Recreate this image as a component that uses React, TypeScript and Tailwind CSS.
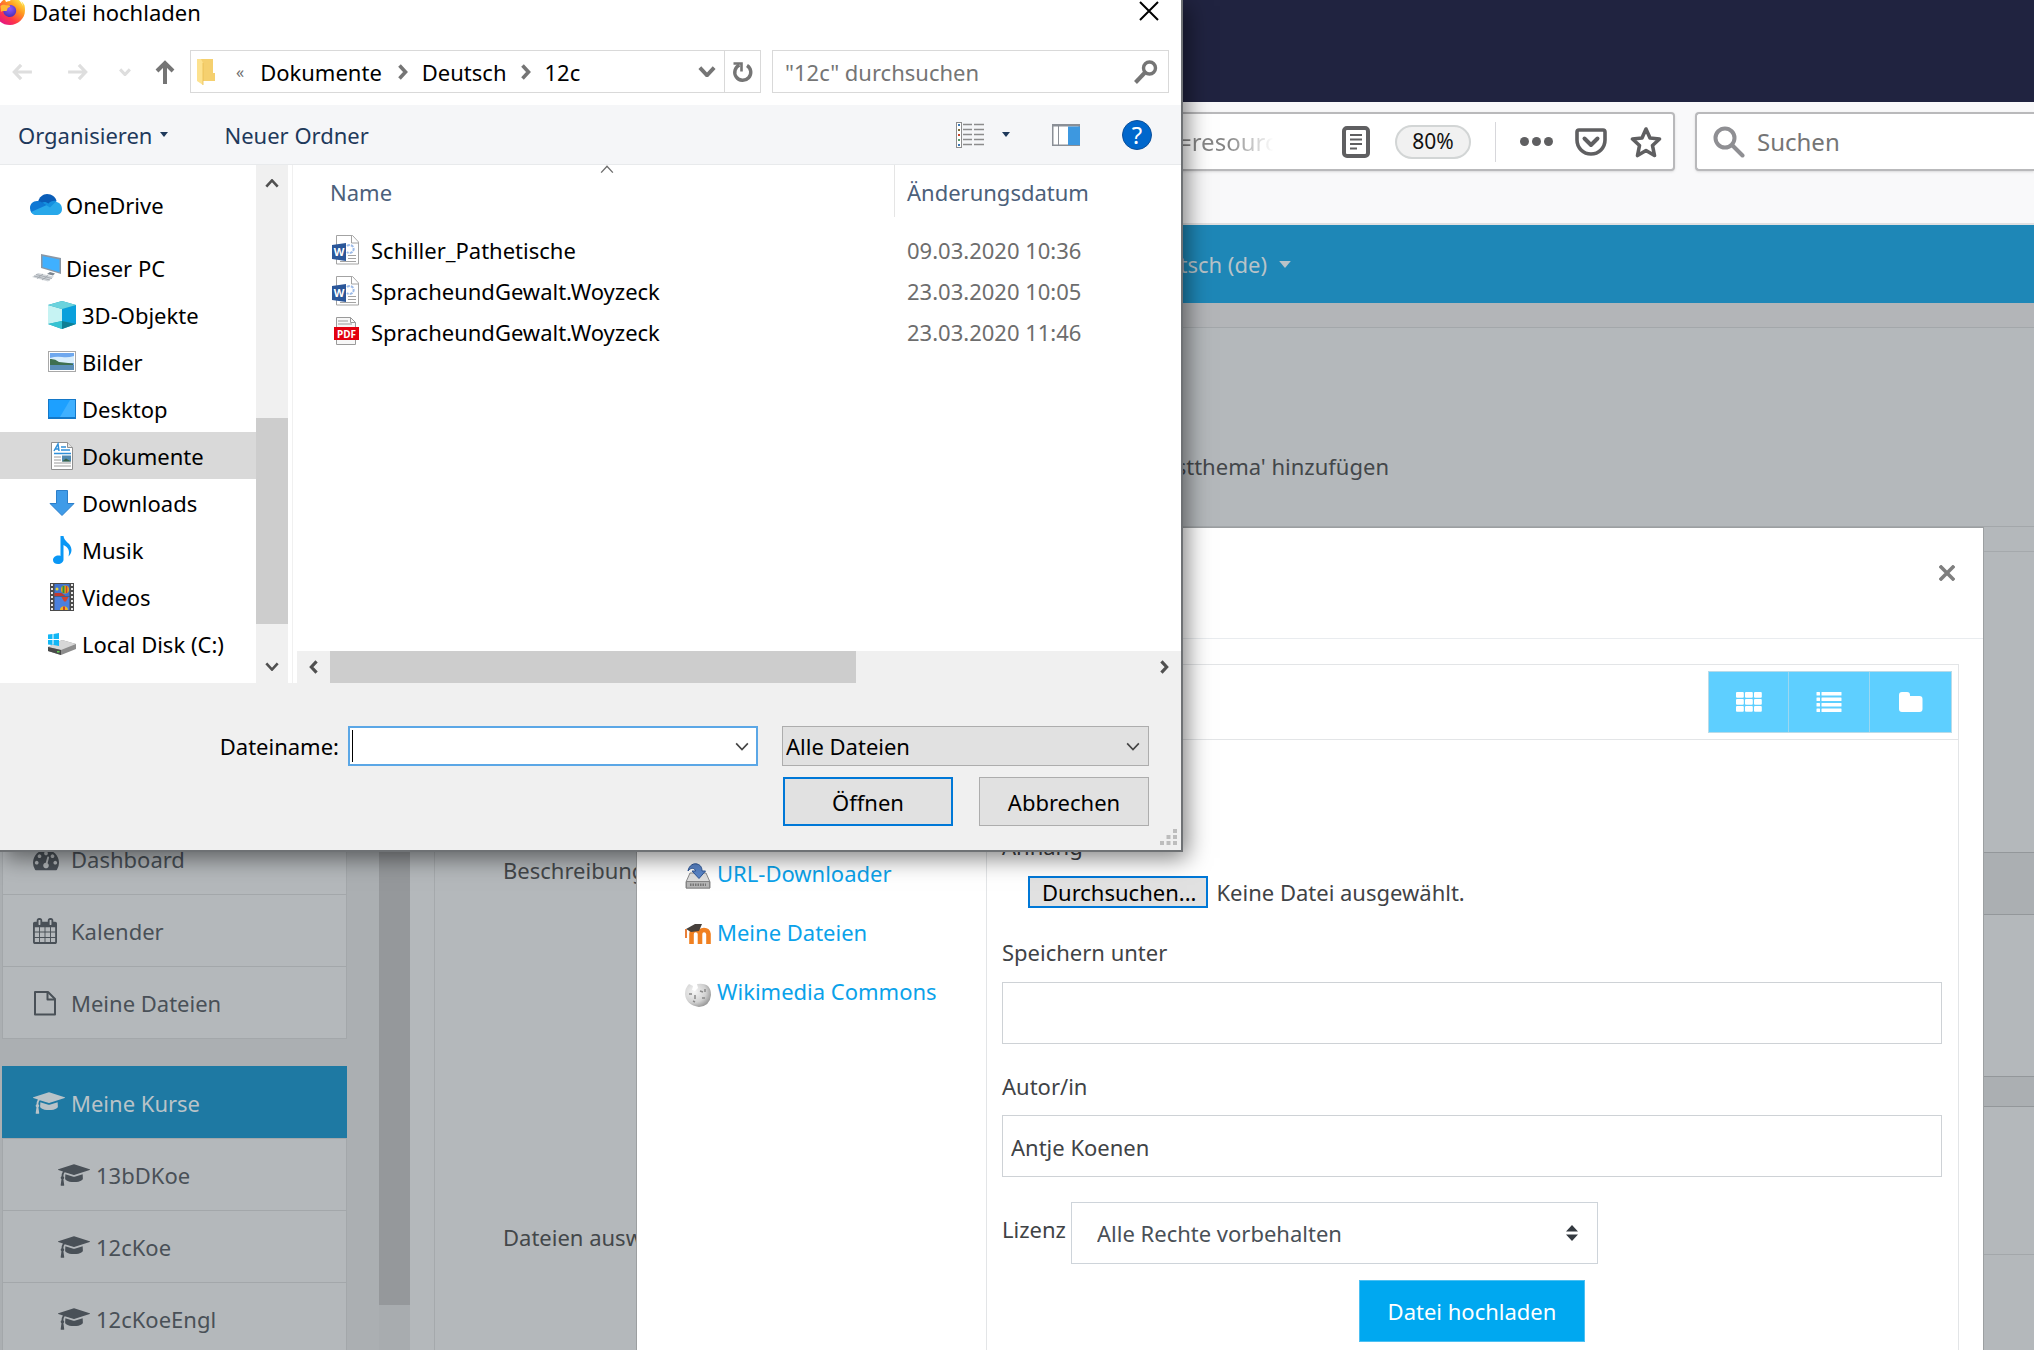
import type { ReactNode } from "react";

type IconProps = { className?: string };

/* ---------- window icons ---------- */

const Firefox = () => (
  <svg viewBox="0 0 32 32" className="size-8 -ml-1.5 -mt-1.5 shrink-0" aria-hidden="true">
    <defs>
      <linearGradient id="ffBody" x1="0.85" y1="0.1" x2="0.2" y2="0.95">
        <stop offset="0" stopColor="#fff44f" />
        <stop offset="0.35" stopColor="#ff9a1f" />
        <stop offset="0.7" stopColor="#ff3647" />
        <stop offset="1" stopColor="#e31587" />
      </linearGradient>
      <radialGradient id="ffGlobe" cx="0.5" cy="0.3" r="0.7">
        <stop offset="0" stopColor="#9059ff" />
        <stop offset="1" stopColor="#4a2fb5" />
      </radialGradient>
    </defs>
    <path
      d="M30.6 11.5c-.7-1.800-2.200-3.700-3.300-4.300.9 1.800 1.500 3.500 1.700 4.900C27.100 7.400 24 5.500 21.400 1.400c-.3-.4-.5-.9-.6-1.200-2.600 1.500-4.200 4.300-4.600 6.800-1.400.1-2.800.4-4.100 1-.8-1-1.200-3-1.200-3S8 6.500 6.400 9.200C5.500 8.500 5.300 5.900 5.300 5.900S1.300 10.500 1.300 17C1.300 25.300 8 31 16 31s15-6.500 15-14.500c0-1.700-.1-3.400-.4-5z"
      fill="url(#ffBody)"
    />
    <path d="M16 11c4 0 6.200 2.600 6.200 5.800s-2.600 6.200-6.200 6.200-6.600-2.600-6.600-5.800c0-1.600.6-2.700 1.400-3.400 1.600.4 3.200-.1 3.700-1.300z" fill="url(#ffGlobe)" />
    <path d="M6.400 12c2-2.200 5-1 6.200-.8 1 .1 3.700.2 3.600 1-.2 1-2 1.300-2.600 2-.6.800.2 2.200-1.400 2.700-1.900.6-3.200-.6-5.300 1z" fill="#ffb836" />
  </svg>
);

const ArrowLeft = ({ className }: IconProps) => (
  <svg viewBox="0 0 22 20" className={className} fill="none" stroke="currentColor" strokeWidth="3.600" aria-hidden="true">
    <path d="M10 2 2.500 10l7.500 8M3 10h19" />
  </svg>
);
const ArrowRight = ({ className }: IconProps) => (
  <svg viewBox="0 0 22 20" className={className} fill="none" stroke="currentColor" strokeWidth="3.600" aria-hidden="true">
    <path d="m12 2 7.500 8-7.500 8M19 10H0" />
  </svg>
);
const ArrowUp = ({ className }: IconProps) => (
  <svg viewBox="0 0 20 24" className={className} fill="none" stroke="currentColor" strokeWidth="4" aria-hidden="true">
    <path d="M2 11 10 3l8 8M10 3.500V24" />
  </svg>
);
const Chevron = ({ className, w = 2 }: IconProps & { w?: number }) => (
  <svg viewBox="0 0 16 10" className={className} fill="none" stroke="currentColor" strokeWidth={w} aria-hidden="true">
    <path d="m1.500 1.500 6.500 7 6.500-7" />
  </svg>
);
const ChevronRight = ({ className }: IconProps) => (
  <svg viewBox="0 0 10 16" className={className} fill="none" stroke="currentColor" strokeWidth="3.600" aria-hidden="true">
    <path d="m1.500 1.500 6 6.500-6 6.500" />
  </svg>
);
const Caret = ({ className }: IconProps) => (
  <svg viewBox="0 0 10 6" className={className} fill="currentColor" aria-hidden="true">
    <path d="M0 0h10L5 6z" />
  </svg>
);
const Close = ({ className, w = 2 }: IconProps & { w?: number }) => (
  <svg viewBox="0 0 20 20" className={className} fill="none" stroke="currentColor" strokeWidth={w} aria-hidden="true">
    <path d="m1 1 18 18M19 1 1 19" />
  </svg>
);
const Folder = () => (
  <svg viewBox="0 0 18 26" className="w-[18px] h-[26px]" aria-hidden="true">
    <path d="M3 0h13v14h2v8H3z" fill="#f5d06f" />
    <path d="M0 0h4l2 4v22l-6-4z" fill="#fde28f" />
    <path d="M6 4v22" stroke="#e9bd52" strokeWidth="0.800" />
  </svg>
);
const Refresh = () => (
  <svg viewBox="0 0 22 22" className="size-[22px]" fill="none" stroke="#757575" strokeWidth="3.400" aria-hidden="true">
    <path d="M15 4.500a8 8 0 1 1-7.500-.5" />
    <path d="M1.500 2.500h8v8" strokeWidth="2.600" />
  </svg>
);
const SearchGlass = () => (
  <svg viewBox="0 0 24 24" className="size-6" fill="none" stroke="#757575" strokeWidth="3.400" aria-hidden="true">
    <circle cx="15.500" cy="8" r="6" />
    <path d="M11 12.500 1.500 22.500" strokeWidth="4" />
  </svg>
);
const ListView = () => (
  <svg viewBox="0 0 28 26" className="w-7 h-[26px]" aria-hidden="true">
    <rect x="0.500" y="0.500" width="5" height="25" fill="#fff" stroke="#8c8c8c" />
    {[3, 8, 13, 18, 23].map((y, i) => (
      <g key={y}>
        <rect x="2" y={y - 1} width="2" height="2" fill={["#3c78b4", "#7a6a3a", "#c8452a", "#5a9a6a", "#3c78b4"][i]} />
        <path d={`M7 ${y - 0.5}h9M18 ${y - 0.5}h10`} stroke="#8c8c8c" strokeWidth="1.500" />
      </g>
    ))}
  </svg>
);
const PreviewPane = () => (
  <svg viewBox="0 0 28 22" className="w-7 h-[22px]" aria-hidden="true">
    <rect x="0.750" y="0.750" width="26.500" height="20.500" fill="#fff" stroke="#8a8f96" strokeWidth="1.500" />
    <path d="M0 1.500h28" stroke="#8a8f96" strokeWidth="2" />
    <path d="M6.500 2v19" stroke="#8a8f96" />
    <rect x="16" y="2.500" width="12" height="18.500" fill="#3d98e0" />
  </svg>
);

/* ---------- navigation tree icons ---------- */

const OneDrive = () => (
  <svg viewBox="0 0 32 22" className="w-8 h-[22px]" aria-hidden="true">
    <path d="M8 8C9 3 13 0 17 0c5 0 8.500 3 9.500 7L16 14z" fill="#0a5db8" />
    <path d="M6 21a7 7 0 0 1-6-7c0-4 3-7 7-7 2 0 3 .5 5 1.500l8 5z" fill="#0f78d4" />
    <path d="M19 10c3-3.500 13-3.500 13 5 0 4-3 6-6 6H6c-2 0-4-1-5-3z" fill="#28a8ea" />
    <path d="m12 8.500 8 5 6.500-6.500c-4-.500-6 .5-8 2.500-2-1.500-4-2-6.500-1z" fill="#1490df" />
  </svg>
);
const ThisPc = () => (
  <svg viewBox="0 0 30 28" className="w-[30px] h-7" aria-hidden="true">
    <path d="m9 0 20 4v16L9 14z" fill="#8a97a5" />
    <path d="m10.500 2 17 3.500v12.800L10.500 13z" fill="#3fb0ff" />
    <path d="m18 18 5 1.500-2 2-6-1.500z" fill="#7d8791" />
    <path d="m6 19 16 3.500-6 5L0 23z" fill="#d3d7db" />
    <path d="m4 20.500 16 4M2 22l16 4M5 24.500l6-4.500M10 26l6-4.500" stroke="#9aa1a8" strokeWidth="0.800" />
  </svg>
);
const Objects3d = () => (
  <svg viewBox="0 0 28 28" className="size-7" aria-hidden="true">
    <path d="M14 0 28 4v19l-14 5L0 23V4z" fill="#21a3bd" />
    <path d="m0 4 14 4v12L0 23z" fill="#c6f3f3" />
    <path d="m28 4-14 4v12l14 3z" fill="#0aa0dc" />
    <path d="m14 0 14 4-14 4L0 4z" fill="#6bd3dd" />
    <path d="m14 20 14 3-14 5z" fill="#0d7f95" />
    <path d="m14 20-14 3 14 5z" fill="#36c3d2" />
  </svg>
);
const Pictures = () => (
  <svg viewBox="0 0 28 21" className="w-7 h-[21px]" aria-hidden="true">
    <rect x="0.500" y="0.500" width="27" height="20" fill="#fff" stroke="#a8a8a8" />
    <rect x="2" y="2" width="24" height="17" fill="#6fa8ee" />
    <path d="M2 7q6-2 12-1t12-1v7H2z" fill="#d9eefc" />
    <path d="M2 8q5-.500 9 3l14 1.500v1.500H2z" fill="#3f7050" />
    <path d="M2 14h24v5H2z" fill="#5b8fb8" />
  </svg>
);
const Desktop = () => (
  <svg viewBox="0 0 28 20" className="w-7 h-5" aria-hidden="true">
    <rect width="28" height="20" fill="#1478c8" />
    <rect x="1" y="1" width="26" height="17" fill="#1da0ff" />
    <path d="M12 18 22 1h5v17z" fill="#3fb0ff" />
  </svg>
);
const Documents = () => (
  <svg viewBox="0 0 28 28" className="size-7" aria-hidden="true">
    <path d="M3.500.500h16l5 5v22h-21z" fill="#fff" stroke="#8f8f8f" />
    <path d="M19.500.500v5h5" fill="#e4e4e4" stroke="#8f8f8f" />
    <path d="m6 9 4-7 1 7M7.500 7h3M13 5h5M13 8h9M6 11.500h17" stroke="#2f8fd8" strokeWidth="1.500" fill="none" />
    <path d="M6 15h7M6 18h7M6 21h17M6 24h17" stroke="#9a9a9a" />
    <rect x="14" y="13.500" width="9" height="6" fill="#4f89b0" />
    <path d="m14 19.500 4-3 5 3z" fill="#3a6348" />
  </svg>
);
const Downloads = () => (
  <svg viewBox="0 0 28 28" className="size-7" aria-hidden="true">
    <path d="M8.500 1.500h11v13h6.500L14 26.500 2 14.500h6.500z" fill="#3f9be8" stroke="#2c7fca" />
  </svg>
);
const Music = () => (
  <svg viewBox="0 0 28 28" className="size-7" aria-hidden="true">
    <path d="M12.500 0h3c.5 6 8 7 8 14 0 3-1.500 5-3 6.500 1.500-6 0-9-5-11.500v14.500c0 2.500-2.500 4.500-5.500 4.500S5 26.500 5 24s2.500-4.500 5.500-4.500c.8 0 1.500.2 2 .4z" fill="#0a97f5" />
  </svg>
);
const Videos = () => (
  <svg viewBox="0 0 28 28" className="size-7" aria-hidden="true">
    <rect x="2" width="24" height="28" fill="#4b4b4b" />
    <rect x="6.500" y="1" width="15" height="12.500" fill="#3f74cf" />
    <rect x="6.500" y="14" width="15" height="13" fill="#4a80dd" />
    <path d="M3 2h2M3 6h2M3 10h2M3 14h2M3 18h2M3 22h2M3 26h2M23 2h2M23 6h2M23 10h2M23 14h2M23 18h2M23 22h2M23 26h2" stroke="#e8e8e8" strokeWidth="2" />
    <circle cx="17" cy="6.500" r="4" fill="#e8a91c" />
    <path d="M15.500 3v7" stroke="#2e8f3c" strokeWidth="2" />
    <path d="M18.500 3v7" stroke="#c8402a" strokeWidth="1.500" />
    <path d="M6.500 10h7l4 3h-11z" fill="#c23a2e" />
    <path d="M13.500 14h7l-2.500 4.500h-2z" fill="#d04330" />
    <path d="M12 27c0-5 8-5 8 0z" fill="#f0b71f" />
    <path d="M15 27v-3.500h2V27z" fill="#c8402a" />
    <circle cx="9" cy="6" r="1.500" fill="#e6d13c" />
  </svg>
);
const Disk = () => (
  <svg viewBox="0 0 28 22" className="w-7 h-[22px]" aria-hidden="true">
    <path d="m0 14 14-7 14 4v5l-15 6L0 18z" fill="#8d8d8d" />
    <path d="m0 14 14-7 14 4-15 6z" fill="#d7d7d7" />
    <path d="m0 14 13 3v5L0 18z" fill="#4a4a4a" />
    <rect x="9" y="18" width="2.500" height="1.500" fill="#63d253" />
    <path d="M0 1.500 4.500 1v5H0zM5.500 1 11 0v6H5.500zM0 7h4.500v5L0 11.500zM5.500 7H11v6l-5.500-1z" fill="#12b7f5" />
  </svg>
);

/* ---------- file type icons ---------- */

const WordFile = () => (
  <svg viewBox="0 0 28 30" className="w-7 h-[30px]" aria-hidden="true">
    <path d="M4.500.500h16l6 6.500v22h-22z" fill="#fff" stroke="#a3a3a3" />
    <path d="M19.500.500V8h7" fill="#fff" stroke="#a3a3a3" />
    <path d="M15 11a4 4 0 1 1 0 6" fill="none" stroke="#9dbbe8" strokeWidth="2" strokeDasharray="3 1" />
    <path d="M16 20.500h8M16 23.500h8M8 26.500h16" stroke="#a3a3a3" strokeWidth="1.200" />
    <path d="m0 10 14-2v18L0 24z" fill="#2a5699" />
    <text x="7" y="21" textAnchor="middle" fontSize="11" fontWeight="700" fill="#fff">W</text>
  </svg>
);
const PdfFile = () => (
  <svg viewBox="0 0 28 30" className="w-7 h-[30px]" aria-hidden="true">
    <path d="M4.500.500h14l5 5v22h-19z" fill="#f7f7f7" stroke="#9a9a9a" />
    <path d="M18.500.500v5h5M6 4h10M6 7h14" fill="none" stroke="#9a9a9a" />
    <rect x="2" y="10" width="25" height="13" fill="#e3000f" />
    <text x="14.500" y="20.500" textAnchor="middle" fontSize="10" fontWeight="700" fill="#fff">PDF</text>
  </svg>
);

/* ---------- website icons ---------- */

const Glyph = ({ box, d, className }: { box: string; d: string; className: string }) => (
  <svg viewBox={box} className={className} fill="currentColor" aria-hidden="true">
    <path d={d} />
  </svg>
);
const GraduationCap = () => (
  <Glyph
    box="0 0 2304 1792"
    className="w-8 h-[26px]"
    d="M1774 836l18 316q4 69-82 128t-235 93.500-323 34.500-323-34.500-235-93.500-82-128l18-316 574 181q22 7 48 7t48-7zm530-324q0 23-22 31l-1120 352q-4 1-10 1t-10-1l-652-206q-43 34-71 111.500t-34 178.500q63 36 63 109 0 69-58 107l58 433q2 14-8 25-9 11-24 11h-192q-15 0-24-11-10-11-8-25l58-433q-58-38-58-107 0-73 65-111 11-207 98-330l-333-104q-22-8-22-31t22-31l1120-352q4-1 10-1t10 1l1120 352q22 8 22 31z"
  />
);
const Calendar = () => (
  <Glyph
    box="64 0 1664 1792"
    className="w-6 h-[26px]"
    d="M192 1664h288v-288h-288v288zm352 0h320v-288h-320v288zm-352-352h288v-320h-288v320zm352 0h320v-320h-320v320zm-352-384h288v-288h-288v288zm736 736h320v-288h-320v288zm-384-736h320v-288h-320v288zm768 736h288v-288h-288v288zm-384-352h320v-320h-320v320zm-352-864v-288q0-13-9.500-22.500t-22.500-9.500h-64q-13 0-22.500 9.500t-9.500 22.500v288q0 13 9.500 22.500t22.500 9.500h64q13 0 22.500-9.500t9.500-22.500zm736 864h288v-320h-288v320zm-384-384h320v-288h-320v288zm384 0h288v-288h-288v288zm32-480v-288q0-13-9.500-22.500t-22.500-9.500h-64q-13 0-22.500 9.500t-9.500 22.500v288q0 13 9.500 22.500t22.500 9.500h64q13 0 22.500-9.500t9.500-22.500zm384-64v1280q0 52-38 90t-90 38h-1408q-52 0-90-38t-38-90v-1280q0-52 38-90t90-38h128v-96q0-66 47-113t113-47h64q66 0 113 47t47 113v96h384v-96q0-66 47-113t113-47h64q66 0 113 47t47 113v96h128q52 0 90 38t38 90z"
  />
);
const Gauge = () => (
  <Glyph
    box="0 0 1792 1792"
    className="w-[26px] h-[26px]"
    d="M384 1152q0-53-37.500-90.500t-90.500-37.500-90.500 37.500-37.500 90.500 37.500 90.500 90.500 37.500 90.500-37.500 37.500-90.500zm192-448q0-53-37.500-90.500t-90.500-37.500-90.500 37.500-37.500 90.500 37.500 90.500 90.500 37.500 90.500-37.500 37.500-90.500zm428 481l101-382q6-26-7.500-48.500t-38.500-29.500-48 6.500-30 39.500l-101 382q-60 5-107 43.500t-63 98.500q-20 77 20 146t117 89 146-20 89-117q16-60-6-117t-72-91zm660-33q0-53-37.500-90.500t-90.500-37.500-90.500 37.500-37.500 90.500 37.500 90.500 90.500 37.500 90.500-37.500 37.500-90.500zm-640-640q0-53-37.500-90.500t-90.500-37.500-90.500 37.500-37.500 90.500 37.500 90.500 90.500 37.500 90.500-37.500 37.500-90.500zm448 192q0-53-37.500-90.500t-90.500-37.500-90.500 37.500-37.500 90.500 37.500 90.500 90.500 37.500 90.500-37.500 37.500-90.500zm320 448q0 261-141 483-19 29-54 29h-1402q-35 0-54-29-141-221-141-483 0-182 71-348t191-286 286-191 348-71 348 71 286 191 191 286 71 348z"
  />
);
const FileOutline = () => (
  <svg viewBox="0 0 24 26" className="w-6 h-[26px]" fill="none" stroke="currentColor" strokeWidth="2" strokeLinejoin="round" aria-hidden="true">
    <path d="M2 2h13l7 7v15.500H2z" />
    <path d="M14.500 2v7.500H22" />
  </svg>
);

const ReaderMode = () => (
  <svg viewBox="0 0 28 32" className="w-7 h-8" fill="none" stroke="currentColor" aria-hidden="true">
    <rect x="2" y="2" width="24" height="28" rx="3" strokeWidth="4" />
    <path d="M8 9h12M8 13.500h12M8 18h12M8 22.500h7" strokeWidth="2.200" />
  </svg>
);
const Pocket = () => (
  <svg viewBox="0 0 32 30" className="w-8 h-[30px]" fill="none" stroke="currentColor" strokeWidth="4" strokeLinecap="round" strokeLinejoin="round" aria-hidden="true">
    <path d="M4 3h24q2 0 2 2v8a14 14 0 0 1-28 0V5q0-2 2-2z" strokeWidth="3.600" />
    <path d="m9.500 11.500 6.500 6.500 6.500-6.500" />
  </svg>
);
const Star = () => (
  <svg viewBox="0 0 32 32" className="size-8" fill="none" stroke="currentColor" strokeWidth="3.600" strokeLinejoin="round" aria-hidden="true">
    <path d="m16 3 4 9 9.500 1-7 6.500 2 10L16 24.500l-8.500 5 2-10-7-6.500L12 12z" />
  </svg>
);
const Magnifier = () => (
  <svg viewBox="0 0 32 32" className="size-8 shrink-0" fill="none" stroke="#8f8f93" strokeWidth="4" strokeLinecap="round" aria-hidden="true">
    <circle cx="12" cy="12" r="9.500" />
    <path d="m19.500 19.500 10 10" />
  </svg>
);

const Grid = () => (
  <svg viewBox="0 0 26 20" className="w-[26px] h-5" fill="currentColor" aria-hidden="true">
    {[0, 7, 14].map((y) => [0, 9, 18].map((x) => <rect key={`${x}-${y}`} x={x} y={y} width="7.800" height="5.800" rx="1" />))}
  </svg>
);
const ListGlyph = () => (
  <svg viewBox="0 0 26 20" className="w-[26px] h-5" fill="currentColor" aria-hidden="true">
    {[0, 5.5, 11, 16.5].map((y) => (
      <g key={y}>
        <rect x="0.500" y={y} width="3.500" height="3.500" rx="0.500" />
        <rect x="5.500" y={y} width="20" height="3.500" rx="0.500" />
      </g>
    ))}
  </svg>
);
const FolderGlyph = () => (
  <svg viewBox="0 0 24 20" className="w-6 h-5" fill="currentColor" aria-hidden="true">
    <path d="M0 3q0-3 3-3h5q3 0 3 3v1h9.500q3 0 3 3v10q0 3-3 3H3q-3 0-3-3z" />
  </svg>
);

const UrlDownloader = () => (
  <svg viewBox="0 0 26 26" className="size-[26px]" aria-hidden="true">
    <path d="M5 10h16l4 9v6H1v-6z" fill="#dedede" stroke="#8a8a8a" />
    <rect x="1.500" y="18.500" width="23" height="6.500" fill="#b5b5b5" stroke="#858585" />
    <path d="M5 21.800h16" stroke="#777" strokeWidth="2.500" strokeDasharray="1.500 1" />
    <path d="M3 8C4 2 9 0 12 1c4 1 5 4 5 7h3.500L14 15.500 7 8h3.500C10 5 6 4 3 8z" fill="#5a85c8" stroke="#2c5596" />
  </svg>
);
const Moodle = () => (
  <svg viewBox="0 0 26 26" className="size-[26px]" aria-hidden="true">
    <path d="M6.500 22V12q0-4 4.200-4t4.300 4v10M15 22V12q0-4 4-4t4.500 4v10" fill="none" stroke="#f08021" strokeWidth="4.600" />
    <path d="m1 7 9-5 7 0-3 7-8 1z" fill="#46403c" />
    <path d="M1 7v9" stroke="#e8803a" strokeWidth="2" />
  </svg>
);
const Wiki = () => (
  <svg viewBox="0 0 26 26" className="size-[26px]" aria-hidden="true">
    <defs>
      <radialGradient id="wikiBall" cx="0.350" cy="0.350" r="0.750">
        <stop offset="0" stopColor="#f6f6f6" />
        <stop offset="0.600" stopColor="#d2d2d2" />
        <stop offset="1" stopColor="#8d8d8d" />
      </radialGradient>
    </defs>
    <path d="M4 3 8 5l-1 4 3 1 3-3-1-4q14-2 14 11-1 11-12 12Q1 24 0 13 0 7 4 3z" fill="url(#wikiBall)" />
    <path d="M4 13h3M10 14v4M15 10l3 1M17 17h3M8 20l2 1M20 8v3" stroke="#8a8a8a" strokeWidth="1.500" />
  </svg>
);

/* ---------- data ---------- */

const treeItems: { label: string; icon: ReactNode; selected?: boolean }[] = [
  { label: "3D-Objekte", icon: <Objects3d /> },
  { label: "Bilder", icon: <Pictures /> },
  { label: "Desktop", icon: <Desktop /> },
  { label: "Dokumente", icon: <Documents />, selected: true },
  { label: "Downloads", icon: <Downloads /> },
  { label: "Musik", icon: <Music /> },
  { label: "Videos", icon: <Videos /> },
  { label: "Local Disk (C:)", icon: <Disk /> },
];

const files = [
  { name: "Schiller_Pathetische", date: "09.03.2020 10:36", icon: <WordFile /> },
  { name: "SpracheundGewalt.Woyzeck", date: "23.03.2020 10:05", icon: <WordFile /> },
  { name: "SpracheundGewalt.Woyzeck", date: "23.03.2020 11:46", icon: <PdfFile /> },
];

const repositories = [
  { label: "URL-Downloader", icon: <UrlDownloader /> },
  { label: "Meine Dateien", icon: <Moodle /> },
  { label: "Wikimedia Commons", icon: <Wiki /> },
];

/* ---------- browser and page behind ---------- */

function BrowserBar() {
  return (
    <header>
      <div className="h-[102px] bg-[#202340]" />
      <div className="flex h-[123px] items-start bg-[#f9f9fa] pt-2.5 border-b-2 border-[#e0e0e1]">
        <div className="flex h-[59px] w-[1675px] items-center justify-end rounded-sm border-2 border-[#b9b9bb] bg-white pr-[11px] text-[#5f5f61] shadow-sm">
          <span className="mr-[52px] bg-linear-to-r from-[#858585] from-45% to-transparent to-85% bg-clip-text text-2xl text-transparent">=resource</span>
          <button aria-label="Leseansicht"><ReaderMode /></button>
          <button className="ml-[25px] h-[34px] w-[76px] rounded-full border-2 border-[#d2d5d5] bg-[#f1f1f1] text-[21px] leading-none text-[#111]">80%</button>
          <span className="ml-6 mr-6 h-10 w-px bg-[#d7d7db]" />
          <button aria-label="Seitenaktionen" className="flex gap-[3px]">
            <i className="size-[9px] rounded-full bg-current" />
            <i className="size-[9px] rounded-full bg-current" />
            <i className="size-[9px] rounded-full bg-current" />
          </button>
          <button aria-label="In Pocket speichern" className="ml-[22px]"><Pocket /></button>
          <button aria-label="Lesezeichen" className="ml-[23px]"><Star /></button>
        </div>
        <label className="ml-5 flex h-[59px] flex-1 items-center gap-3 rounded-l-sm border-2 border-r-0 border-[#b9b9bb] bg-white pl-4 shadow-sm">
          <Magnifier />
          <input aria-label="Suchen" placeholder="Suchen" className="w-full text-2xl outline-none placeholder:text-[#757575]" />
        </label>
      </div>
      <div className="flex h-[78px] items-center bg-[#1e87b7] text-[#b9c3c8]">
        <button className="flex w-[1291px] items-center justify-end gap-3">
          Deutsch (de) <Caret className="h-[7px] w-3" />
        </button>
      </div>
    </header>
  );
}

function SideLink({ icon, label, sub, active }: { icon: ReactNode; label: string; sub?: boolean; active?: boolean }) {
  return (
    <a
      href="#"
      className={`flex h-[73px] -mb-px shrink-0 items-center border ${
        active ? "border-[#1e79a3] bg-[#1e79a3] text-[#b9c3c8]" : "border-[#a3a7aa] bg-[#b4b8bb] text-[#495057]"
      } ${sub ? "pl-[55px]" : "pl-[30px]"}`}
    >
      <span className="w-[38px] shrink-0">{icon}</span>
      {label}
    </a>
  );
}

function Page() {
  return (
    <div className="flex min-h-0 flex-1 bg-[#b4b8bb]">
      <nav aria-label="Hauptmenü" className="w-[379px] shrink-0 bg-[#abafb2] pl-0.5 pr-8 pt-[519px]">
        <SideLink icon={<Gauge />} label="Dashboard" />
        <SideLink icon={<Calendar />} label="Kalender" />
        <SideLink icon={<FileOutline />} label="Meine Dateien" />
        <div className="h-7" />
        <SideLink icon={<GraduationCap />} label="Meine Kurse" active />
        <SideLink icon={<GraduationCap />} label="13bDKoe" sub />
        <SideLink icon={<GraduationCap />} label="12cKoe" sub />
        <SideLink icon={<GraduationCap />} label="12cKoeEngl" sub />
      </nav>
      <div className="w-[31px] shrink-0 bg-[#a8acaf]">
        <div className="h-[1002px] bg-[#95989b]" />
      </div>
      <main className="flex flex-1 flex-col">
        <div className="h-6 bg-[#b3b5b8]" />
        <div className="flex h-[200px] items-center border-y border-[#a3a7aa] pt-[78px]">
          <h1 className="w-[979px] text-right text-[#43474a]">Datei zu 'Testthema' hinzufügen</h1>
        </div>
        <div className="mt-6 ml-6 flex flex-1 border-l border-t border-[#a5a9ac] text-[#43474a]">
          <div className="w-[240px] pl-[68px] pt-[303px]">
            <div className="h-[367px]">Beschreibung</div>
            <div>Dateien auswählen</div>
          </div>
          <div className="flex-1 pt-[300px]">
            <div className="h-[63px] border-y border-[#93979a] bg-[#abafb2]" />
            <div className="h-[161px]" />
            <div className="h-[31px] border-y border-[#93979a] bg-[#abafb2]" />
            <div className="h-[148px] border-b border-[#a3a7aa]" />
          </div>
        </div>
      </main>
    </div>
  );
}

/* ---------- file picker ---------- */

function FilePicker() {
  return (
    <section aria-label="Dateiauswahl" className="absolute top-[527px] right-[50px] bottom-0 left-[636px] flex flex-col border border-b-0 border-[#9c9fa1] bg-white text-[#3f4346]">
      <div className="flex h-[111px] shrink-0 justify-end border-b border-[#e9ecef] pr-7 pt-[37px]">
        <button aria-label="Schließen" className="size-4 text-[#7f7f7f]"><Close w={4.5} className="size-4" /></button>
      </div>
      <div className="ml-[25px] mr-6 mt-[25px] flex flex-1 flex-col border-r border-t border-[#e3e5e7]">
        <div className="flex h-[75px] shrink-0 items-center justify-end border-b border-[#e3e5e7] pr-1.5">
          <div className="flex h-[62px] divide-x divide-[#9bd7f0] border border-[#b8dbe9] bg-[#5ecfff] text-white">
            <button aria-label="Symbole" className="flex w-20 items-center justify-center"><Grid /></button>
            <button aria-label="Liste" className="flex w-[81px] items-center justify-center"><ListGlyph /></button>
            <button aria-label="Ordner" className="flex w-[81px] items-center justify-center"><FolderGlyph /></button>
          </div>
        </div>
        <div className="flex flex-1">
          <nav aria-label="Repositories" className="w-[325px] shrink-0 border-r border-[#e3e5e7] pl-[23px] pt-[103px]">
            {repositories.map((r) => (
              <a key={r.label} href="#" className="flex h-[59px] items-center gap-1.5 text-[#0aa2ea]">
                <span className="pt-1.5">{r.icon}</span>
                {r.label}
              </a>
            ))}
          </nav>
          <form className="flex flex-1 flex-col pl-[15px] pr-4 pt-[90px]">
            <p className="leading-8">Anhang</p>
            <div className="mt-3.5 flex items-center gap-2 pl-[26px]">
              <label className="flex h-8 items-center border-2 border-[#0078d7] bg-[#e1e1e1] pl-3 pr-2.5 text-black">
                Durchsuchen...
                <input type="file" className="sr-only" />
              </label>
              <span>Keine Datei ausgewählt.</span>
            </div>
            <label htmlFor="save-as" className="mt-7 leading-8">Speichern unter</label>
            <input id="save-as" className="mt-3.5 h-[62px] border border-[#ced2d6] px-2.5 outline-none" />
            <label htmlFor="author" className="mt-[26px] leading-8">Autor/in</label>
            <input id="author" defaultValue="Antje Koenen" className="mt-[13px] h-[62px] border border-[#ced2d6] px-2 pt-0.5 outline-none" />
            <div className="mt-[25px] flex gap-1.5">
              <label htmlFor="licence" className="w-[63px] pt-[11px] leading-8">Lizenz</label>
              <div className="relative w-[527px]">
                <select id="licence" className="h-[62px] w-full appearance-none border border-[#ced4da] bg-white pl-[25px] pr-10 text-[#495057] outline-none">
                  <option>Alle Rechte vorbehalten</option>
                </select>
                <svg viewBox="0 0 12 16" className="pointer-events-none absolute right-5 top-[23px] h-4 w-3" fill="#343a40" aria-hidden="true">
                  <path d="M6 0 12 6.500H0zM6 16l6-6.500H0z" />
                </svg>
              </div>
            </div>
            <button type="button" className="mt-4 h-[62px] w-[226px] self-center border border-[#4cc0f3] bg-[#00a8f0] text-white">
              Datei hochladen
            </button>
          </form>
        </div>
      </div>
    </section>
  );
}

/* ---------- upload dialog ---------- */

function TreePane() {
  return (
    <div className="flex w-[288px] shrink-0">
      <ul className="w-64 pt-4">
        <li className="flex h-[47px] items-center gap-1 pl-[30px]"><OneDrive />OneDrive</li>
        <li className="mt-4 flex h-[47px] items-center gap-1 pl-8"><ThisPc />Dieser PC</li>
        {treeItems.map((t) => (
          <li key={t.label} className={`flex h-[47px] items-center gap-1.5 pl-12 ${t.selected ? "bg-[#d9d9d9]" : ""}`}>
            {t.icon}
            {t.label}
          </li>
        ))}
      </ul>
      <div className="flex flex-1 flex-col items-center bg-[#f0f0f0] text-[#505050]">
        <Chevron w={3} className="mt-3.5 h-[9px] w-3.5 rotate-180" />
        <div className="mt-[230px] h-[206px] w-full bg-[#cdcdcd]" />
        <Chevron w={3} className="mt-[38px] h-[9px] w-3.5" />
      </div>
    </div>
  );
}

function FilesPane() {
  return (
    <div className="ml-1 flex flex-1 flex-col border-l border-[#f0f0f0] pl-1">
      <table className="w-full table-fixed border-collapse text-left">
        <colgroup>
          <col className="w-[598px]" />
          <col />
        </colgroup>
        <thead>
          <tr className="text-[#4c607a]">
            <th className="relative p-0 pb-3 font-normal">
              <Chevron w={1.5} className="absolute left-[302px] top-0 h-[9px] w-4 rotate-180 text-[#6d6d6d]" />
              <div className="flex h-[52px] items-center border-r border-[#e5e5e5] pl-[33px] pt-0.5">Name</div>
            </th>
            <th className="p-0 pb-3 font-normal">
              <div className="flex h-[52px] items-center pl-3 pt-0.5">Änderungsdatum</div>
            </th>
          </tr>
        </thead>
        <tbody>
          {files.map((f) => (
            <tr key={f.date} className="h-[41px]">
              <td className="p-0">
                <div className="flex items-center gap-[11px] pl-[35px]">
                  {f.icon}
                  {f.name}
                </div>
              </td>
              <td className="p-0 pl-3 text-[#6d6d6d]">{f.date}</td>
            </tr>
          ))}
        </tbody>
      </table>
      <div className="mt-auto flex h-8 items-center bg-[#f0f0f0] text-[#505050]">
        <div className="flex w-[33px] justify-center"><ChevronRight className="h-3.5 w-[9px] rotate-180" /></div>
        <div className="h-full w-[526px] bg-[#cdcdcd]" />
        <ChevronRight className="ml-auto mr-3 h-3.5 w-[9px]" />
      </div>
    </div>
  );
}

function UploadDialog() {
  return (
    <section
      role="dialog"
      aria-label="Datei hochladen"
      className="absolute left-0 top-0 w-[1183px] max-w-full border-b-2 border-r-2 border-[#6e7174] bg-white text-black shadow-[4px_6px_22px_rgba(0,0,0,0.5)]"
    >
      <div className="flex h-[50px] items-start pr-[22px]">
        <Firefox />
        <h2 className="ml-1.5 leading-6">Datei hochladen</h2>
        <button aria-label="Schließen" className="ml-auto"><Close className="mt-px size-5" /></button>
      </div>

      <div className="flex h-[43px] items-center pr-3">
        <div className="flex w-[190px] items-center pl-[11px] text-[#dedede]">
          <button aria-label="Zurück"><ArrowLeft className="h-[18px] w-[22px]" /></button>
          <button aria-label="Vorwärts" className="ml-[34px]"><ArrowRight className="h-[18px] w-[22px]" /></button>
          <button aria-label="Verlauf" className="ml-[30px]"><Chevron w={4} className="h-2 w-3" /></button>
          <button aria-label="Nach oben" className="ml-6 text-[#757575]"><ArrowUp className="h-6 w-5" /></button>
        </div>
        <div className="flex h-[43px] w-[571px] items-center border border-[#d9d9d9] pl-1.5">
          <Folder />
          <span className="ml-[21px] text-base text-[#6d6d6d]">«</span>
          <span className="ml-4">Dokumente</span>
          <ChevronRight className="ml-4 h-4 w-2.5 text-[#757575]" />
          <span className="ml-3.5">Deutsch</span>
          <ChevronRight className="ml-3.5 h-4 w-2.5 text-[#757575]" />
          <span className="ml-3.5">12c</span>
          <button aria-label="Vorherige Orte" className="ml-auto mr-2 text-[#757575]"><Chevron w={3.500} className="h-[11px] w-[18px]" /></button>
          <button aria-label="Aktualisieren" className="flex h-full w-9 items-center justify-center border-l border-[#d9d9d9]"><Refresh /></button>
        </div>
        <label className="ml-[11px] flex h-[43px] flex-1 items-center border border-[#d9d9d9] pl-3 pr-2.5">
          <input aria-label="12c durchsuchen" placeholder={'"12c" durchsuchen'} className="min-w-0 flex-1 outline-none placeholder:text-[#757575]" />
          <SearchGlass />
        </label>
      </div>

      <div className="mt-3 flex h-[60px] items-center border-b border-[#e8eaec] bg-[#f5f6f8] pl-[18px] pr-[29px] text-[#1e395b]">
        <button className="flex items-center gap-2">Organisieren <Caret className="h-[5px] w-2" /></button>
        <button className="ml-14">Neuer Ordner</button>
        <button aria-label="Ansicht" className="ml-auto flex items-center gap-[18px]"><ListView /><Caret className="h-[5px] w-2" /></button>
        <button aria-label="Vorschaufenster" className="ml-[42px]"><PreviewPane /></button>
        <button aria-label="Hilfe" className="ml-[42px] flex size-[30px] items-center justify-center rounded-full border border-[#0b4f9a] bg-[#0067cc] text-2xl leading-none text-white">?</button>
      </div>

      <div className="flex h-[518px]">
        <TreePane />
        <FilesPane />
      </div>

      <form className="relative bg-[#f0f0f0] pb-6 pr-8 pt-[43px]">
        <div className="flex items-center justify-end">
          <label htmlFor="filename" className="mr-[9px]">Dateiname:</label>
          <div className="relative w-[410px]">
            <input id="filename" className="h-10 w-full border-2 border-[#5ba7e6] bg-white px-1 outline-none" />
            <span className="absolute left-1 top-1 h-8 w-px bg-black" />
            <Chevron w={1.800} className="absolute right-2 top-4 h-[9px] w-4 text-[#444]" />
          </div>
          <div className="relative ml-6 w-[367px]">
            <select aria-label="Dateityp" className="h-10 w-full appearance-none border border-[#adadad] bg-[#e1e1e1] px-[3px] outline-none">
              <option>Alle Dateien</option>
            </select>
            <Chevron w={1.800} className="pointer-events-none absolute right-2 top-4 h-[9px] w-4 text-[#444]" />
          </div>
        </div>
        <div className="mt-[11px] flex justify-end gap-[26px]">
          <button type="button" className="h-[49px] w-[170px] border-2 border-[#0078d7] bg-[#e1e1e1]">Öffnen</button>
          <button type="button" className="h-[49px] w-[170px] border border-[#adadad] bg-[#e1e1e1]">Abbrechen</button>
        </div>
        <svg viewBox="0 0 17 17" className="absolute bottom-1 right-1 size-[17px]" fill="#bdbdbd" aria-hidden="true">
          <path d="M13 0h4v4h-4zM13 6h4v4h-4zM13 12h4v4h-4zM6.500 6h4v4h-4zM6.500 12h4v4h-4zM0 12h4v4H0z" />
        </svg>
      </form>
    </section>
  );
}

export default function App() {
  return (
    <div className="relative flex h-screen flex-col overflow-hidden bg-[#b4b8bb] font-['Noto_Sans',sans-serif] text-[22px] leading-[30px] whitespace-nowrap">
      <BrowserBar />
      <Page />
      <FilePicker />
      <UploadDialog />
    </div>
  );
}
